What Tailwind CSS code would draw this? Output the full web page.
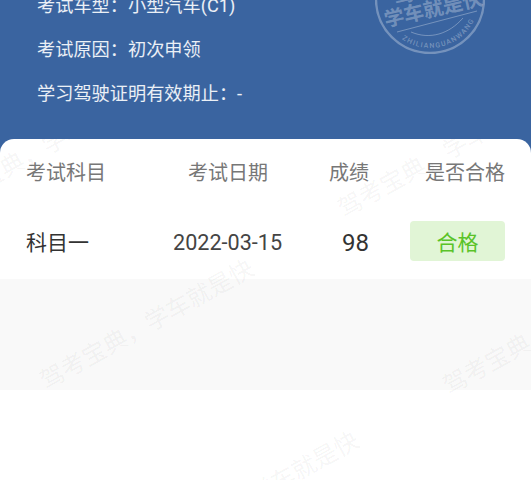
<!DOCTYPE html>
<html lang="zh-CN">
<head>
    <meta charset="UTF-8">
    <meta name="viewport" content="width=device-width, initial-scale=1.0">
    <title>考试成绩</title>
    <script src="https://cdn.jsdelivr.net/npm/@tailwindcss/browser@4"></script>
</head>
<body class="bg-[#3a64a0] font-['Roboto','Noto_Sans_CJK_SC',sans-serif]">
    <div class="h-[480px] w-[531px] overflow-hidden flex flex-col">

        <!-- 考试信息 -->
        <header class="relative h-[139px] shrink-0 overflow-hidden pl-[37px] text-[18.2px] leading-[44px] text-white/90">
            <div class="-mt-[16px]">
                <p>考试车型：小型汽车(C1)</p>
                <p>考试原因：初次申领</p>
                <p>学习驾驶证明有效期止：-</p>
            </div>

            <!-- 印章 -->
            <div class="absolute left-[375px] top-[-56px] size-[110px] text-white/30">
                <svg viewBox="0 0 110 110" class="size-full" fill="none" stroke="currentColor">
                    <circle cx="55" cy="55" r="54" stroke-width="2.4"/>
                    <path d="M22 88 L102 67" stroke-width="1"/>
                    <path d="M36 88 C55 96 74 90 88 74" stroke-width="1"/>
                    <path id="seal-curve" d="M26.9 95.1 A49 49 0 0 0 99.4 75.7" stroke="none"/>
                    <text font-size="7" fill="currentColor" stroke="none" font-family="Roboto, sans-serif" font-weight="500">
                        <textPath href="#seal-curve" textLength="84">ZHILIANGUANWANG</textPath>
                    </text>
                    <text x="11" y="83" font-size="20" font-weight="700" fill="currentColor" stroke="none" transform="rotate(-13 11 83)" font-family="Noto Sans CJK SC, sans-serif">学车就是快</text>
                    <text x="20" y="60" font-size="20" font-weight="700" fill="currentColor" stroke="none" transform="rotate(-13 20 60)" font-family="Noto Sans CJK SC, sans-serif">驾考宝典</text>
                </svg>
            </div>
        </header>

        <!-- 成绩表 -->
        <main class="relative flex-1 overflow-hidden rounded-t-[14px] bg-white">
            <div class="flex h-[66px] items-center pl-[26px] pt-[2px] text-[20px] text-[#777]">
                <span class="w-[162px]">考试科目</span>
                <span class="w-[141px]">考试日期</span>
                <span class="w-[96px]">成绩</span>
                <span>是否合格</span>
            </div>
            <div class="flex h-[74px] items-center pl-[26px] text-[21px] text-[#333]">
                <span class="w-[147px] pt-[4px]">科目一</span>
                <span class="w-[169px] pt-[2px] text-[21.6px] text-[#444]">2022-03-15</span>
                <span class="w-[68px] pt-[2px] text-[24px]">98</span>
                <span class="mb-[2px] flex h-[40px] w-[95px] items-center justify-center rounded-[4px] bg-[#e1f5d6] pt-[6px] text-[#5ac328]">合格</span>
            </div>
            <div class="h-[111px] bg-[#f9f9f9]"></div>

            <!-- 水印 -->
            <div class="pointer-events-none absolute inset-0 text-[24px] leading-[24px] whitespace-nowrap text-black/[0.05]">
                <span class="absolute left-[-61px] top-[55px] origin-left -rotate-[29deg]">驾考宝典，学车就是快</span>
                <span class="absolute left-[340px] top-[60px] origin-left -rotate-[29deg]">驾考宝典，学车就是快</span>
                <span class="absolute left-[42px] top-[232px] origin-left -rotate-[29deg]">驾考宝典，学车就是快</span>
                <span class="absolute left-[445px] top-[237px] origin-left -rotate-[29deg]">驾考宝典，学车就是快</span>
                <span class="absolute left-[147px] top-[404px] origin-left -rotate-[29deg]">驾考宝典，学车就是快</span>
            </div>
        </main>
    </div>
</body>
</html>
